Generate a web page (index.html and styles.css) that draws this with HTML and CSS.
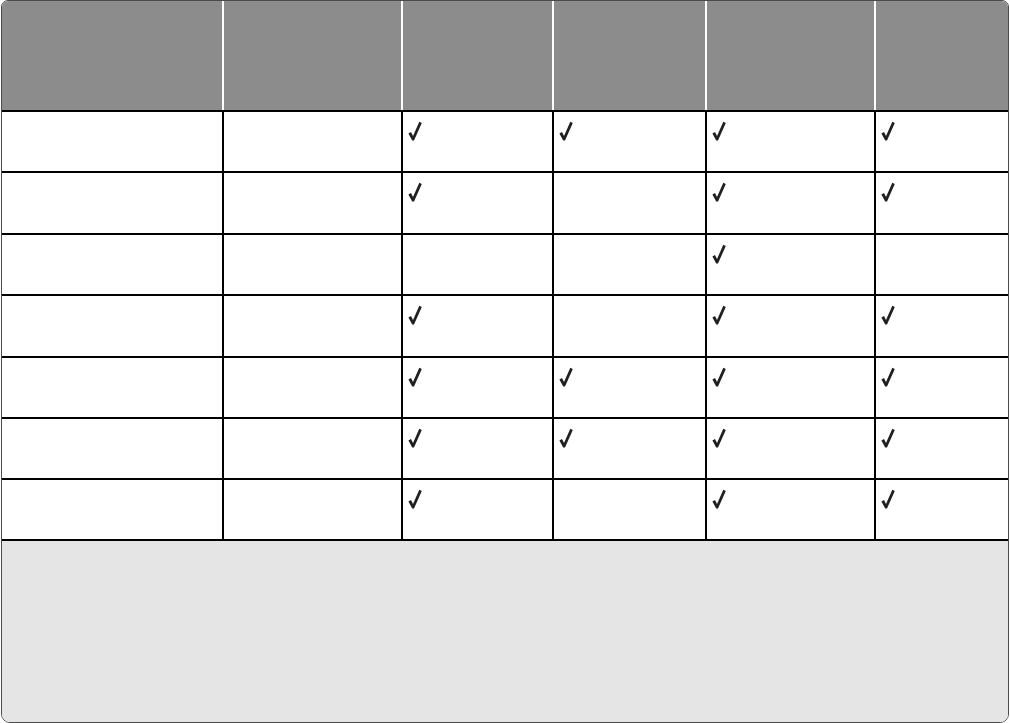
FILE: index.html
```html
<!DOCTYPE html>
<html>
<head>
<meta charset="utf-8">
<link rel="stylesheet" href="styles.css">
</head>
<body>
<svg width="0" height="0" class="defs">
  <defs>
    <symbol id="chk" viewBox="0 0 14 20">
      <path d="M0.4 12.6 L3 11.1 L5 15 L11.3 0.7 L13.8 1.9 L6 19.6 L4.2 19.6 Z"/>
    </symbol>
  </defs>
</svg>
<div class="frame">
  <div class="head">
    <div class="hc"></div><div class="hc"></div><div class="hc"></div><div class="hc"></div><div class="hc"></div><div class="hc"></div>
  </div>
  <div class="grid">
    <!-- row 1 -->
    <div class="c"></div><div class="c"></div>
    <div class="c"><svg class="ck"><use href="#chk"/></svg></div>
    <div class="c"><svg class="ck"><use href="#chk"/></svg></div>
    <div class="c"><svg class="ck"><use href="#chk"/></svg></div>
    <div class="c"><svg class="ck"><use href="#chk"/></svg></div>
    <!-- row 2 -->
    <div class="c"></div><div class="c"></div>
    <div class="c"><svg class="ck"><use href="#chk"/></svg></div>
    <div class="c"></div>
    <div class="c"><svg class="ck"><use href="#chk"/></svg></div>
    <div class="c"><svg class="ck"><use href="#chk"/></svg></div>
    <!-- row 3 -->
    <div class="c"></div><div class="c"></div>
    <div class="c"></div>
    <div class="c"></div>
    <div class="c"><svg class="ck"><use href="#chk"/></svg></div>
    <div class="c"></div>
    <!-- row 4 -->
    <div class="c"></div><div class="c"></div>
    <div class="c"><svg class="ck"><use href="#chk"/></svg></div>
    <div class="c"></div>
    <div class="c"><svg class="ck"><use href="#chk"/></svg></div>
    <div class="c"><svg class="ck"><use href="#chk"/></svg></div>
    <!-- row 5 -->
    <div class="c"></div><div class="c"></div>
    <div class="c"><svg class="ck"><use href="#chk"/></svg></div>
    <div class="c"><svg class="ck"><use href="#chk"/></svg></div>
    <div class="c"><svg class="ck"><use href="#chk"/></svg></div>
    <div class="c"><svg class="ck"><use href="#chk"/></svg></div>
    <!-- row 6 -->
    <div class="c"></div><div class="c"></div>
    <div class="c"><svg class="ck"><use href="#chk"/></svg></div>
    <div class="c"><svg class="ck"><use href="#chk"/></svg></div>
    <div class="c"><svg class="ck"><use href="#chk"/></svg></div>
    <div class="c"><svg class="ck"><use href="#chk"/></svg></div>
    <!-- row 7 -->
    <div class="c"></div><div class="c"></div>
    <div class="c"><svg class="ck"><use href="#chk"/></svg></div>
    <div class="c"></div>
    <div class="c"><svg class="ck"><use href="#chk"/></svg></div>
    <div class="c"><svg class="ck"><use href="#chk"/></svg></div>
  </div>
  <div class="foot"></div>
</div>
</body>
</html>
```

FILE: styles.css
```css
html, body {
  margin: 0;
  padding: 0;
  background: #ffffff;
  font-family: "Liberation Sans", Arial, sans-serif;
}
.defs {
  position: absolute;
  width: 0;
  height: 0;
}
.frame {
  box-sizing: border-box;
  margin-left: 1px;
  width: 1008px;
  height: 723px;
  border: 1px solid #4a4a4a;
  border-radius: 7px 7px 9px 9px;
  overflow: hidden;
  display: flex;
  flex-direction: column;
  background: #ffffff;
}
.head {
  display: grid;
  grid-template-columns: 222px 179px 151px 153px 169px 1fr;
  height: 111px;
  flex: none;
  background: #8c8c8c;
  border-bottom: 2px solid #000;
  box-sizing: border-box;
}
.hc {
  border-right: 2px solid #ffffff;
}
.hc:last-child {
  border-right: none;
}
.grid {
  display: grid;
  grid-template-columns: 222px 179px 151px 153px 169px 1fr;
  grid-template-rows: 61px 62px 61px 62px 61px 61px 61px;
  flex: none;
  border-left: 1px solid #000;
  border-right: 1px solid #000;
  margin: 0 -1px;
}
.c {
  box-sizing: border-box;
  border-right: 2px solid #000;
  border-bottom: 2px solid #000;
  padding: 9px 0 0 5px;
}
.c:nth-child(6n) {
  border-right: none;
}
.ck {
  display: block;
  width: 14px;
  height: 20px;
  fill: #202020;
}
.foot {
  flex: 1;
  background: #e5e5e5;
}
```
